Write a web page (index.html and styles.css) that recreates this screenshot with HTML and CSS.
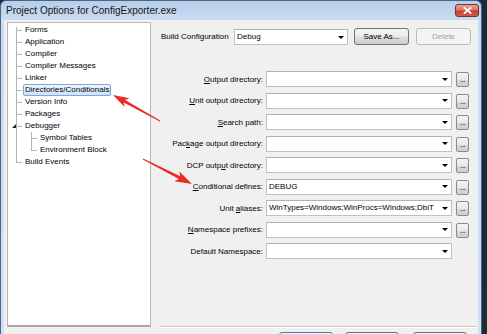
FILE: index.html
```html
<!DOCTYPE html>
<html>
<head>
<meta charset="utf-8">
<link rel="stylesheet" href="styles.css">
</head>
<body>
<div class="window">
  <div class="titlebar">
    <span class="title">Project Options for ConfigExporter.exe</span>
    <span class="close"><svg width="9" height="7" viewBox="0 0 9 7"><path d="M1.5 1 L7.5 6 M7.5 1 L1.5 6" stroke="#fff" stroke-width="1.8" stroke-linecap="square"/></svg></span>
  </div>
  <div class="client">
    <div class="main">
      <div class="tree">
        <ul class="root">
          <li><span class="lbl">Forms</span></li>
          <li><span class="lbl">Application</span></li>
          <li><span class="lbl">Compiler</span></li>
          <li><span class="lbl">Compiler Messages</span></li>
          <li><span class="lbl">Linker</span></li>
          <li><span class="lbl sel">Directories/Conditionals</span></li>
          <li><span class="lbl">Version Info</span></li>
          <li><span class="lbl">Packages</span></li>
          <li class="expanded"><span class="toggle"></span><span class="lbl">Debugger</span>
            <ul>
              <li><span class="lbl">Symbol Tables</span></li>
              <li><span class="lbl">Environment Block</span></li>
            </ul>
          </li>
          <li><span class="lbl">Build Events</span></li>
        </ul>
      </div>
      <div class="panel">
        <div class="build-row">
          <span class="build-label">Build Configuration</span>
          <div class="combo build-combo"><span class="val">Debug</span><span class="arrow"></span></div>
          <span class="btn save">Save As...</span>
          <span class="btn disabled">Delete</span>
        </div>
        <div class="form">
          <div class="row"><span class="label"><u>O</u>utput directory:</span><div class="combo"><span class="val"></span><span class="arrow"></span></div><span class="ell">...</span></div>
          <div class="row"><span class="label"><u>U</u>nit output directory:</span><div class="combo"><span class="val"></span><span class="arrow"></span></div><span class="ell">...</span></div>
          <div class="row"><span class="label"><u>S</u>earch path:</span><div class="combo"><span class="val"></span><span class="arrow"></span></div><span class="ell">...</span></div>
          <div class="row"><span class="label">Pac<u>k</u>age output directory:</span><div class="combo"><span class="val"></span><span class="arrow"></span></div><span class="ell">...</span></div>
          <div class="row"><span class="label">DCP outp<u>u</u>t directory:</span><div class="combo"><span class="val"></span><span class="arrow"></span></div><span class="ell">...</span></div>
          <div class="row"><span class="label"><u>C</u>onditional defines:</span><div class="combo"><span class="val">DEBUG</span><span class="arrow"></span></div><span class="ell">...</span></div>
          <div class="row"><span class="label">Unit <u>a</u>liases:</span><div class="combo"><span class="val">WinTypes=Windows;WinProcs=Windows;DbiT</span><span class="arrow"></span></div><span class="ell">...</span></div>
          <div class="row"><span class="label"><u>N</u>amespace prefixes:</span><div class="combo"><span class="val"></span><span class="arrow"></span></div><span class="ell">...</span></div>
          <div class="row"><span class="label">Default Namespace:</span><div class="combo"><span class="val"></span><span class="arrow"></span></div></div>
        </div>
        <div class="sep"></div>
      </div>
    </div>
    <div class="footer">
      <span class="btn fbtn default"></span>
      <span class="btn fbtn cancel"></span>
      <span class="btn fbtn help"></span>
    </div>
  </div>
</div>
<svg class="arrows" width="487" height="334" viewBox="0 0 487 334">
  <polygon fill="#ec2a23" points="113,95 129.4,98.3 125.1,100 160.2,120.6 159.8,121.4 123.7,102.6 124.6,107.1"/>
  <polygon fill="#ec2a23" points="192,184 179.4,171.4 180.2,176.3 143.2,158.6 142.8,159.5 178.9,179 174.4,181.2"/>
</svg>
</body>
</html>
```

FILE: styles.css
```css
html, body {
  margin: 0;
  padding: 0;
}
body {
  width: 487px;
  height: 334px;
  overflow: hidden;
  position: relative;
  background: #1d2a38;
  font-family: "Liberation Sans", Arial, sans-serif;
  color: #000;
}
.window {
  width: 482px;
  height: 362px;
  box-sizing: border-box;
  border: 1px solid #4c6585;
  border-bottom: none;
  border-radius: 6px 6px 0 0;
  background: linear-gradient(#b7cee9, #cadcf1 19px, #d2e1f3);
  padding: 0 3px;
  display: flex;
  flex-direction: column;
}
.titlebar {
  height: 19px;
  display: flex;
  align-items: flex-start;
  padding-left: 2px;
}
.title {
  font-size: 10px;
  line-height: 19px;
  color: #151515;
  flex: 1;
}
.close {
  margin-top: 3px;
  margin-right: -1px;
  width: 24px;
  height: 13px;
  box-sizing: border-box;
  border: 1px solid #7a3026;
  border-radius: 3px;
  background: linear-gradient(#e8a597, #d67664 45%, #c2432f 55%, #cf5d4a);
  display: flex;
  align-items: center;
  justify-content: center;
}
.close svg {
  display: block;
}
.client {
  flex: 1;
  background: #f0f0f0;
  padding: 2px 0 0 3px;
  display: flex;
  flex-direction: column;
}
.main {
  display: flex;
  height: 306px;
}
.tree {
  width: 144px;
  height: 305px;
  box-sizing: border-box;
  border: 1px solid #b6b6b6;
  border-bottom: 2px solid #a7a7a7;
  background: #fff;
  padding-top: 1px;
  flex-shrink: 0;
}
.tree ul {
  list-style: none;
  margin: 0;
  padding: 0 0 0 15px;
}
.tree li {
  position: relative;
  font-size: 8px;
  line-height: 12px;
}
.tree li::before {
  content: "";
  position: absolute;
  left: -7px;
  top: 6px;
  width: 6px;
  border-top: 1px solid #b4b4b4;
}
.tree li::after {
  content: "";
  position: absolute;
  left: -7px;
  top: 0;
  bottom: 0;
  border-left: 1px solid #b4b4b4;
}
.tree .root > li:first-child::after {
  top: 3px;
}
.tree li:last-child::after {
  bottom: auto;
  height: 6px;
}
.lbl {
  display: inline-block;
  vertical-align: top;
  height: 10px;
  line-height: 10px;
  padding: 0 1px;
  border: 1px solid transparent;
  white-space: nowrap;
}
.lbl.sel {
  border-color: #7fa6d6;
  border-radius: 2px;
  background: linear-gradient(#eef5fd, #cde2fb);
}
.toggle {
  position: absolute;
  left: -11px;
  top: 4px;
  width: 0;
  height: 0;
  border-bottom: 4px solid #262626;
  border-left: 4px solid transparent;
  z-index: 1;
}
.panel {
  flex: 1;
  display: flex;
  flex-direction: column;
  font-size: 8px;
}
.build-row {
  display: flex;
  align-items: flex-start;
  margin-top: 7px;
  padding-left: 10px;
}
.build-label {
  width: 73px;
  line-height: 16px;
  flex-shrink: 0;
}
.combo {
  display: flex;
  align-items: center;
  height: 16px;
  box-sizing: border-box;
  border: 1px solid #bdc0c4;
  border-top-color: #aeb1b6;
  background: #fff;
  padding-left: 2px;
  flex-shrink: 0;
}
.combo .val {
  flex: 1;
  overflow: hidden;
  white-space: nowrap;
  line-height: 14px;
}
.combo .arrow {
  width: 0;
  height: 0;
  border-left: 3px solid transparent;
  border-right: 3px solid transparent;
  border-top: 3px solid #000;
  margin: 0 3px 0 2px;
  flex-shrink: 0;
}
.build-combo {
  width: 114px;
}
.btn {
  display: block;
  box-sizing: border-box;
  height: 17px;
  border: 1px solid #707070;
  border-radius: 3px;
  background: linear-gradient(#f4f4f4, #ebebeb 48%, #dcdcdc 52%, #d0d0d0);
  font-size: 8px;
  line-height: 15px;
  text-align: center;
  flex-shrink: 0;
}
.save {
  width: 55px;
  margin-left: 6px;
  margin-top: -1px;
}
.btn.disabled {
  width: 55px;
  margin-left: 7px;
  margin-top: -1px;
  border-color: #b9bcbf;
  background: #f4f4f4;
  color: #a3a3a3;
}
.form {
  display: flex;
  flex-direction: column;
  gap: 5.5px;
  margin-top: 26px;
}
.row {
  display: flex;
  align-items: center;
  height: 16px;
}
.row .label {
  width: 112px;
  text-align: right;
  flex-shrink: 0;
  white-space: nowrap;
}
.row .combo {
  width: 186px;
  margin-left: 3px;
}
.ell {
  align-self: flex-end;
  width: 13px;
  height: 15px;
  box-sizing: border-box;
  margin-left: 4px;
  border: 1px solid #8a8a8a;
  border-radius: 2px;
  background: linear-gradient(#f4f4f4, #e9e9e9 50%, #d9d9d9 52%, #cfcfcf);
  font-size: 8px;
  line-height: 8px;
  display: flex;
  align-items: flex-end;
  justify-content: center;
  padding-bottom: 2px;
  letter-spacing: -0.5px;
}
.sep {
  margin-top: auto;
  margin-left: 9px;
  margin-right: 1px;
  border-top: 1px solid #c8c8c8;
  border-bottom: 1px solid #ffffff;
}
.footer {
  display: flex;
  justify-content: flex-end;
  padding-right: 11px;
  margin-top: 4px;
}
.fbtn {
  width: 54px;
  height: 21px;
  line-height: 19px;
}
.fbtn.default {
  border-color: #3c7fb1;
}
.fbtn.cancel {
  margin-left: 12px;
}
.fbtn.help {
  margin-left: 14px;
}
.arrows {
  position: absolute;
  left: 0;
  top: 0;
  pointer-events: none;
}
```
